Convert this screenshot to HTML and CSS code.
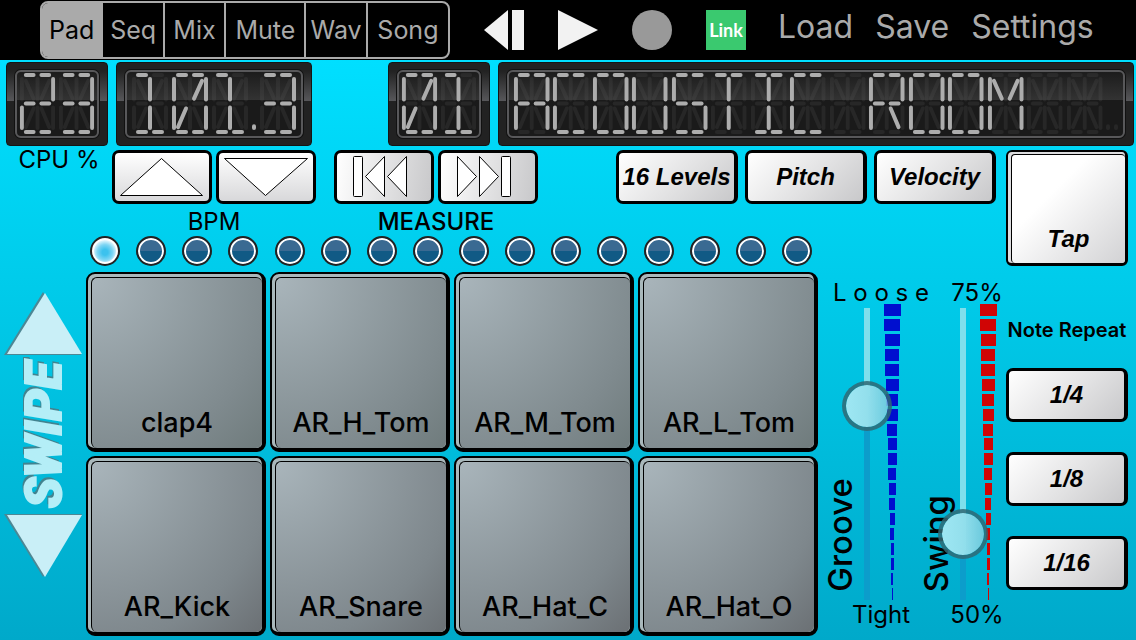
FILE: index.html
```html
<!DOCTYPE html>
<html lang="en">
<head>
    <meta charset="utf-8">
    <meta name="viewport" content="width=device-width, initial-scale=1">
    <title>Drum Pads</title>
    <link rel="stylesheet" href="styles.css">
</head>
<body>

    <header class="topbar">
        <nav class="tabs">
            <button class="tab active">Pad</button>
            <button class="tab">Seq</button>
            <button class="tab">Mix</button>
            <button class="tab wide">Mute</button>
            <button class="tab">Wav</button>
            <button class="tab wide">Song</button>
        </nav>
        <div class="transport">
            <button class="icon" aria-label="Rewind">
                <svg viewBox="0 0 40 40"><polygon points="0,20 24,0 24,40" /><rect x="28" width="12" height="40" /></svg>
            </button>
            <button class="icon" aria-label="Play">
                <svg viewBox="0 0 40 40"><polygon points="0,0 40,20 0,40" /></svg>
            </button>
            <button class="icon record" aria-label="Record">
                <svg viewBox="0 0 40 40"><circle cx="20" cy="20" r="20" /></svg>
            </button>
            <button class="link">Link</button>
        </div>
        <div class="menu">
            <button>Load</button>
            <button>Save</button>
            <button>Settings</button>
        </div>
    </header>

    <section class="displays">
        <div class="display small"><div class="glass" role="img" data-text="23"></div></div>
        <div class="display tempo"><div class="glass" role="img" data-text="101.3"></div></div>
        <div class="display small"><div class="glass" role="img" data-text="01"></div></div>
        <div class="display name"><div class="glass" role="img" data-text="ACOUSTIC ROOM  :"></div></div>
    </section>

    <section class="controls">
        <div class="left">
            <div class="toolbar">
                <span class="cpu">CPU %</span>
                <div class="group">
                    <div class="pair">
                        <button class="step" aria-label="BPM up">
                            <svg viewBox="0 0 94 48"><polygon points="5.5,42.5 46.5,5.5 87.5,42.5" /></svg>
                        </button>
                        <button class="step" aria-label="BPM down">
                            <svg viewBox="0 0 94 48"><polygon points="5.5,5.5 88.5,5.5 46.5,42.5" /></svg>
                        </button>
                    </div>
                    <span class="caption">BPM</span>
                </div>
                <div class="group">
                    <div class="pair">
                        <button class="step side" aria-label="Previous measure">
                            <svg viewBox="0 0 94 48"><rect x="16.5" y="3.5" width="9" height="40" rx="1" /><polygon points="47.5,3.5 47.5,43.5 28.5,23.5" /><polygon points="69.5,3.5 69.5,43.5 50.5,23.5" /></svg>
                        </button>
                        <button class="step side" aria-label="Next measure">
                            <svg viewBox="0 0 94 48"><polygon points="16.5,3.5 16.5,43.5 35.5,23.5" /><polygon points="38.5,3.5 38.5,43.5 57.5,23.5" /><rect x="60.5" y="3.5" width="9" height="40" rx="1" /></svg>
                        </button>
                    </div>
                    <span class="caption strong">MEASURE</span>
                </div>
                <div class="modes">
                    <button class="key">16 Levels</button>
                    <button class="key">Pitch</button>
                    <button class="key">Velocity</button>
                </div>
            </div>
            <div class="leds"></div>
        </div>
        <button class="tap"><span>Tap</span></button>
    </section>

    <main class="stage">
        <div class="swipe">
            <svg viewBox="0 0 80 66"><polygon class="shade" points="0,64 39,1 77,64" /><polygon points="3,63 41,2 78,63" /></svg>
            <span>SWIPE</span>
            <svg viewBox="0 0 80 66"><polygon class="shade" points="0,1 78,1 39,64" /><polygon points="3,2 78,2 41,64" /></svg>
        </div>

        <div class="pads">
            <button class="pad"><span>clap4</span></button>
            <button class="pad"><span>AR_H_Tom</span></button>
            <button class="pad"><span>AR_M_Tom</span></button>
            <button class="pad"><span>AR_L_Tom</span></button>
            <button class="pad low"><span>AR_Kick</span></button>
            <button class="pad low"><span>AR_Snare</span></button>
            <button class="pad low"><span>AR_Hat_C</span></button>
            <button class="pad low"><span>AR_Hat_O</span></button>
        </div>

        <div class="channels">
            <div class="channel">
                <span class="mark">L o o s e</span>
                <div class="fader">
                    <label for="groove">Groove</label>
                    <input type="range" id="groove" min="0" max="100" value="70">
                    <div class="bars blue"></div>
                </div>
                <span class="mark">Tight</span>
            </div>
            <div class="channel">
                <span class="mark">75%</span>
                <div class="fader">
                    <label for="swing">Swing</label>
                    <input type="range" id="swing" min="0" max="100" value="17">
                    <div class="bars red"></div>
                </div>
                <span class="mark">50%</span>
            </div>
        </div>

        <div class="repeat">
            <span class="title">Note Repeat</span>
            <button class="key">1/4</button>
            <button class="key">1/8</button>
            <button class="key">1/16</button>
        </div>
    </main>

    <script src="script.js"></script>
</body>
</html>
```

FILE: styles.css
```css
* {
    box-sizing: border-box;
    margin: 0;
    padding: 0;
}

body {
    display: flex;
    flex-direction: column;
    min-height: 100vh;
    font-family: Inter, "Liberation Sans", sans-serif;
    color: #000;
    background: linear-gradient(#00dfff 60px, #00cbea 45%, #00a9ca);
}

button {
    font: inherit;
    color: inherit;
    background: none;
    border: none;
    cursor: pointer;
}

svg {
    display: block;
}

/* top bar */
.topbar {
    display: flex;
    align-items: center;
    height: 60px;
    padding-left: 40px;
    background: #000;
    color: #aaa;
}

.tabs {
    display: flex;
    width: 410px;
    height: 58px;
    border: 2px solid #aaa;
    border-radius: 8px;
    overflow: hidden;
}

.tab {
    flex: 1 1 62px;
    font-size: 25px;
    border-right: 2px solid #aaa;
}

.tab.wide {
    flex-basis: 81px;
}

.tab:last-child {
    border-right: none;
}

.tab.active {
    background: #aaa;
    color: #000;
}

.transport {
    display: flex;
    gap: 34px;
    margin-left: 34px;
}

.icon {
    width: 40px;
    height: 40px;
    fill: #f2f2f2;
}

.record {
    fill: #999;
}

.link {
    width: 40px;
    height: 40px;
    font-family: Lato, sans-serif;
    font-size: 18px;
    font-weight: bold;
    color: #fff;
    background: #3ac96f;
}

.menu {
    display: flex;
    gap: 22px;
    margin-left: 32px;
    padding-bottom: 8px;
    font-size: 32px;
}

/* segment displays */
.displays {
    display: flex;
    gap: 8px;
    padding: 2px 2px 4px 6px;
}

.display {
    height: 84px;
    padding: 7px 8px;
    border: 1px solid #151515;
    border-radius: 4px;
    background: linear-gradient(#222 8px, #57575a 38px, #222 38px);
}

.display.small {
    width: 102px;
}

.display.tempo {
    width: 196px;
    margin-right: 68px;
}

.display.name {
    flex: 1;
}

.glass {
    display: flex;
    height: 100%;
    padding: 1px;
    border: 2px solid #58585a;
    border-radius: 6px;
    box-shadow: 0 0 0 1px #111;
    background: linear-gradient(#1c1c1c, #333 28px, #1a1a1a 28px);
}

.tempo .glass,
.name .glass {
    padding: 1px 3px;
}

.cell {
    flex: 1;
    min-width: 0;
    height: 62px;
}

.point {
    width: 8px;
    height: 62px;
}

.cell line,
.point line {
    stroke: #666;
    stroke-opacity: 0.18;
    stroke-width: 4;
    stroke-linecap: round;
}

.cell .on,
.point .on {
    stroke: #adadad;
    stroke-opacity: 1;
}

/* buttons under the displays */
.controls {
    display: flex;
    gap: 10px;
    padding-right: 8px;
}

.left {
    flex: 1;
}

.toolbar {
    display: flex;
    height: 86px;
    font-size: 24px;
}

.cpu {
    width: 112px;
    padding-left: 6px;
    line-height: 20px;
    text-align: center;
}

.group {
    display: flex;
    flex-direction: column;
    align-items: center;
    margin-right: 18px;
}

.pair {
    display: flex;
    gap: 4px;
}

.step {
    width: 100px;
    height: 54px;
    border: 3px solid #000;
    border-radius: 7px;
    background: linear-gradient(#fff, #d8d8da);
}

.step.side {
    background: linear-gradient(100deg, #fff, #c8c8ca);
}

.step svg {
    fill: #fff;
    stroke: #000;
    stroke-width: 1;
}

.caption {
    line-height: 36px;
}

.strong {
    font-weight: 500;
}

.modes {
    display: flex;
    gap: 7px;
    margin-left: auto;
}

.key {
    width: 122px;
    height: 54px;
    border: 3px solid #000;
    border-right-width: 4px;
    border-radius: 7px;
    font: italic bold 24px "Liberation Sans", sans-serif;
    white-space: nowrap;
    background: linear-gradient(135deg, #fff, #e2e2e3 55%, #c8c8ca);
}

.tap {
    display: flex;
    width: 122px;
    height: 116px;
    padding: 2px 0 0 3px;
    border: 2px solid #000;
    border-right-width: 3px;
    border-bottom-width: 3px;
    border-radius: 6px;
    font: italic bold 24px "Liberation Sans", sans-serif;
    background: #dcdcde;
}

.tap span {
    display: flex;
    flex: 1;
    align-self: stretch;
    align-items: flex-end;
    justify-content: center;
    padding-bottom: 10px;
    border-top: 1px solid #000;
    border-left: 1px solid #000;
    border-radius: 4px;
    background: linear-gradient(135deg, #fff 35%, #d2d2d4);
}

.leds {
    display: flex;
    justify-content: space-between;
    margin: 0 184px 0 90px;
}

.led {
    width: 30px;
    height: 30px;
    border: 2px solid #222;
    border-radius: 50%;
    box-shadow: inset 0 0 0 2px #fff;
    background: linear-gradient(#3a6a92 13px, #115a85 13px);
}

.led.on {
    background: radial-gradient(circle at 50% 55%, #3cc2ee 15%, #7fd6f4 40%, #fff 68%);
}

/* pads */
.stage {
    display: grid;
    grid-template-columns: 86px 1fr 188px 122px;
    flex: 1;
    padding: 6px 8px 4px 0;
}

.swipe {
    display: flex;
    flex-direction: column;
    align-items: center;
    padding: 19px 0 0 2px;
    fill: #c9eff7;
}

.swipe svg {
    width: 80px;
    height: 66px;
}

.swipe .shade {
    fill: #4d8794;
}

.swipe span {
    height: 156px;
    line-height: 56px;
    writing-mode: vertical-rl;
    transform: rotate(180deg);
    text-align: center;
    font-family: Roboto, sans-serif;
    font-size: 50px;
    font-weight: 900;
    font-style: italic;
    color: #b4eef7;
    -webkit-text-stroke: 2px #b4eef7;
    text-shadow: 3px -2px #42838f;
}

.pads {
    display: grid;
    grid-template-columns: repeat(4, 1fr);
    grid-auto-rows: 1fr;
    gap: 4px;
}

.pad {
    display: flex;
    padding: 3px 0 0 3px;
    border: 2px solid #000;
    border-right-width: 4px;
    border-bottom-width: 4px;
    border-radius: 9px;
    font-size: 27px;
    font-weight: 500;
    background: #a9b8bb;
}

.pad span {
    display: flex;
    flex: 1;
    align-self: stretch;
    align-items: flex-end;
    justify-content: center;
    padding-bottom: 9px;
    border-top: 1px solid #000;
    border-left: 1px solid #000;
    border-radius: 6px;
    background: radial-gradient(circle at 0 0, #a9b5bb, #7f8a8e 75%, #6f7b7c);
}

.pad.low span {
    background: radial-gradient(circle at 0 0, #a9b5bb, #7e878c 75%, #6b7074);
}

/* faders */
.channels {
    display: flex;
    gap: 20px;
    padding: 8px 0 0 6px;
}

.channel {
    width: 76px;
    font-size: 24px;
}

.mark {
    display: flex;
    justify-content: center;
    margin-left: 38px;
    line-height: 26px;
    white-space: nowrap;
}

.fader {
    display: flex;
    height: 296px;
    margin: -2px 0 2px;
}

.fader label {
    align-self: flex-end;
    width: 38px;
    line-height: 32px;
    padding-top: 8px;
    writing-mode: vertical-rl;
    transform: rotate(180deg);
    font-size: 33px;
    font-weight: 500;
}

.fader input {
    position: relative;
    z-index: 1;
    width: 50px;
    height: 292px;
    margin: 4px 0 0 -20px;
    writing-mode: vertical-lr;
    direction: rtl;
    appearance: none;
    background: linear-gradient(#7edfec var(--split), #0c9dcb var(--split)) center / 6px 100% no-repeat;
}

.fader input::-webkit-slider-thumb {
    appearance: none;
    width: 50px;
    height: 50px;
    border: 4px solid rgba(48, 104, 116, 0.85);
    border-radius: 50%;
    background: linear-gradient(90deg, #9ee7f3, #93dfec 50%, rgba(125, 205, 222, 0.85)) padding-box;
}

.bars {
    display: flex;
    flex-direction: column;
    align-items: center;
    justify-content: space-between;
    width: 16px;
    margin-left: -8px;
}

.bar {
    height: 12px;
}

.blue .bar {
    background: #000fcf;
}

.red .bar {
    background: #d00505;
}

/* note repeat */
.repeat {
    display: flex;
    flex-direction: column;
    gap: 30px;
    padding-top: 46px;
}

.title {
    margin-bottom: -4px;
    line-height: 24px;
    text-align: center;
    white-space: nowrap;
    font-size: 20px;
    font-weight: 600;
}
```

FILE: script.js
```javascript
const SVG = 'http://www.w3.org/2000/svg';

// end points of every segment in a 40 x 63 cell
const segments = {
    a1: [8, 2, 16, 2], a2: [24, 2, 32, 2],
    f: [4, 6, 4, 27], i: [20, 6, 20, 27], b: [36, 6, 36, 27],
    h: [8, 8, 16, 26], j: [32, 8, 24, 26],
    g1: [8, 31, 16, 31], g2: [24, 31, 32, 31],
    e: [4, 35, 4, 56], l: [20, 35, 20, 56], c: [36, 35, 36, 56],
    m: [16, 36, 8, 55], k: [24, 36, 32, 55],
    d1: [8, 60, 16, 60], d2: [24, 60, 32, 60]
};

const chars = {
    '0': 'a1 a2 b c d1 d2 e f j m',
    '1': 'a1 i l d1 d2',
    '2': 'a1 a2 b g1 g2 e d1 d2',
    '3': 'a1 a2 b g1 g2 c d1 d2',
    A: 'a1 a2 b c e f g1 g2',
    C: 'a1 a2 d1 d2 e f',
    I: 'a1 a2 i l d1 d2',
    M: 'b c e f h j',
    O: 'a1 a2 b c d1 d2 e f',
    R: 'a1 a2 b e f g1 g2 k',
    S: 'a1 a2 f g1 g2 c d1 d2',
    T: 'a1 a2 i l',
    U: 'b c d1 d2 e f',
    ' ': ''
};

function makeSvg(cls, width) {
    let svg = document.createElementNS(SVG, 'svg');
    svg.setAttribute('class', cls);
    svg.setAttribute('viewBox', '0 0 ' + width + ' 63');
    svg.setAttribute('preserveAspectRatio', 'none');
    return svg;
}

function addLine(svg, p, on) {
    let line = document.createElementNS(SVG, 'line');
    line.setAttribute('x1', p[0]);
    line.setAttribute('y1', p[1]);
    line.setAttribute('x2', p[2]);
    line.setAttribute('y2', p[3]);
    if (on) line.setAttribute('class', 'on');
    svg.appendChild(line);
}

document.querySelectorAll('.glass').forEach(function (glass) {
    let text = glass.dataset.text;
    glass.setAttribute('aria-label', text.replace(':', '').trim());

    for (let ch of text) {
        if (ch === '.' || ch === ':') {
            // ':' is the pair of unlit points at the end of the name
            let count = ch === '.' ? 1 : 2;
            for (let n = 0; n < count; n++) {
                let point = makeSvg('point', 8);
                addLine(point, [4, 54, 4, 56], ch === '.');
                glass.appendChild(point);
            }
            continue;
        }
        let cell = makeSvg('cell', 40);
        let lit = chars[ch].split(' ');
        for (let name in segments) {
            addLine(cell, segments[name], false);
        }
        for (let name in segments) {
            if (lit.includes(name)) addLine(cell, segments[name], true);
        }
        glass.appendChild(cell);
    }
});

const leds = document.querySelector('.leds');
for (let n = 0; n < 16; n++) {
    let led = document.createElement('div');
    led.className = n === 0 ? 'led on' : 'led';
    leds.appendChild(led);
}

document.querySelectorAll('.bars').forEach(function (bars) {
    for (let n = 0; n < 20; n++) {
        let bar = document.createElement('div');
        bar.className = 'bar';
        bar.style.width = Math.max(1, Math.round(17 - n * 0.85)) + 'px';
        bars.appendChild(bar);
    }
});

// the track changes colour at the thumb
document.querySelectorAll('.fader input').forEach(function (input) {
    function paint() {
        input.style.setProperty('--split', (100 - input.value) + '%');
    }
    input.addEventListener('input', paint);
    paint();
});
```
